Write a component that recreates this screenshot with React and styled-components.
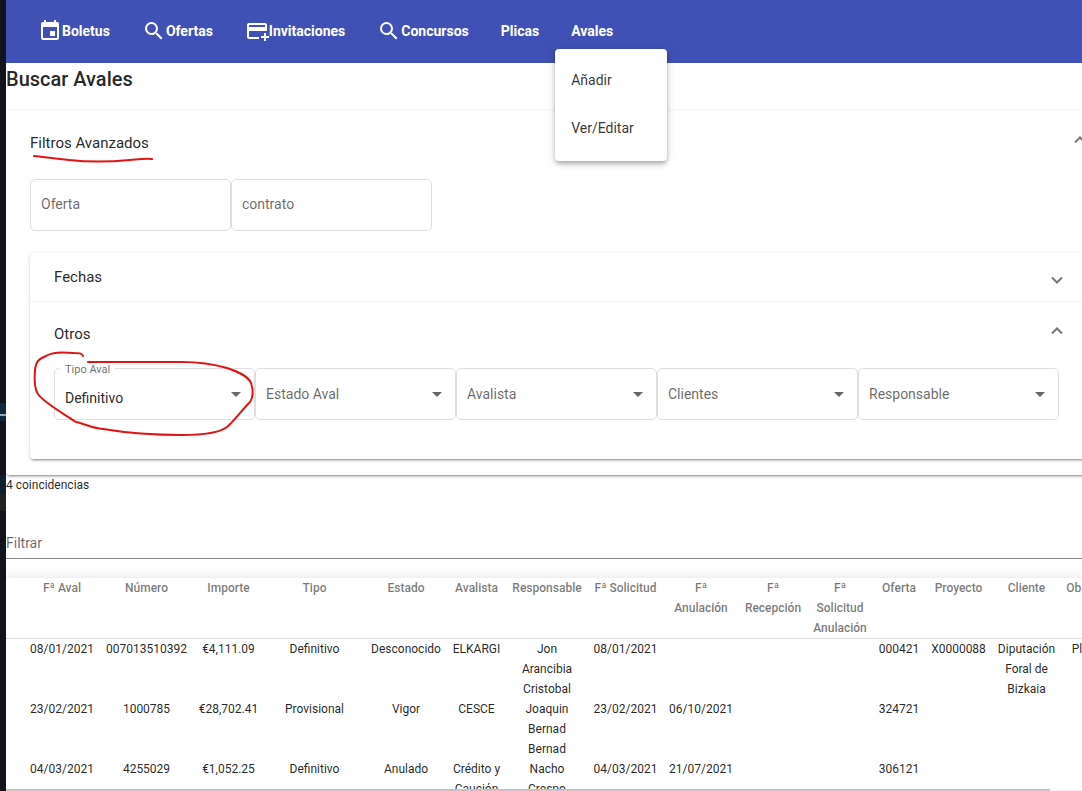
import React from "react";
import styled, { createGlobalStyle } from "styled-components";
import { MdAddCard, MdArrowDropDown, MdEvent, MdSearch } from "react-icons/md";

const GlobalStyle = createGlobalStyle`
  * { box-sizing: border-box; }
  body {
    margin: 0;
    overflow: hidden;
    background: #fff;
    color: rgba(0, 0, 0, 0.87);
    font: 400 14px/20px Roboto, "Liberation Sans", sans-serif;
  }
`;

const Page = styled.div`
  position: relative;
  display: flex;
  height: 100vh;
  overflow: hidden;
`;

const Gutter = styled.div`
  flex: 0 0 6px;
  background: linear-gradient(
    #12141d 0 403px,
    #10283c 403px 414px,
    #9aa4ac 414px 416px,
    #10283c 416px 421px,
    #12141d 421px 475px,
    #10202f 475px 494px,
    #222327 494px 511px,
    #12141d 511px
  );
`;

const Main = styled.main`
  flex: 1;
  min-width: 0;
  display: flex;
  flex-direction: column;
  overflow: hidden;
`;

const Toolbar = styled.nav`
  flex: none;
  display: flex;
  align-items: center;
  height: 63px;
  padding: 0 16px 2px;
  background: #3f51b5;
`;

const NavItem = styled.div`
  position: relative;
`;

const NavButton = styled.button`
  display: flex;
  align-items: center;
  height: 36px;
  padding: 0 16px;
  border: 0;
  background: none;
  color: #fff;
  font: 700 14px/20px Roboto, sans-serif;
  cursor: pointer;
  svg { width: 24px; height: 24px; }
`;

const Menu = styled.div`
  position: absolute;
  z-index: 2;
  top: 100%;
  left: 0;
  width: 112px;
  padding: 8px 0;
  border-radius: 4px;
  background: #fff;
  box-shadow: 0 2px 4px -1px rgba(0, 0, 0, 0.2), 0 4px 5px rgba(0, 0, 0, 0.14),
    0 1px 10px rgba(0, 0, 0, 0.12);
`;

const MenuItem = styled.button`
  display: block;
  width: 100%;
  height: 48px;
  padding: 0 16px 2px;
  border: 0;
  background: none;
  color: rgba(0, 0, 0, 0.8);
  font: 400 14px/20px Roboto, sans-serif;
  text-align: left;
`;

const Title = styled.h1`
  flex: none;
  height: 48px;
  margin: 0;
  font-size: 20px;
  font-weight: 500;
  line-height: 32px;
`;

const elevation = `
  box-shadow: 0 3px 1px -2px rgba(0, 0, 0, 0.2), 0 2px 2px rgba(0, 0, 0, 0.14),
    0 1px 5px rgba(0, 0, 0, 0.12);
`;

const Panel = styled.section`
  flex: none;
  width: calc(100% + 28px);
  padding: 0 24px 16px;
  border-radius: 4px;
  ${elevation}
`;

const PanelHeader = styled.button`
  display: flex;
  align-items: center;
  justify-content: space-between;
  width: 100%;
  height: ${(p) => (p.$open ? 64 : 48)}px;
  padding: ${(p) => (p.$inner ? "0 23px 0 24px" : 0)};
  border: 0;
  background: none;
  color: inherit;
  font: 400 15px/24px Roboto, sans-serif;
  text-align: left;
`;

const ChevronIcon = styled.svg`
  width: 12px;
  height: 8px;
  margin: ${(p) => (p.$open ? "0 0 6px" : "6px 0 0")};
  fill: none;
  stroke: #757575;
  stroke-width: 2;
  transform: ${(p) => (p.$open ? "none" : "rotate(180deg)")};
`;

const Accordion = styled.div`
  margin-top: 22px;
  border-radius: 4px;
  ${elevation}
`;

const Section = styled.div`
  & + & { border-top: 1px solid #f0f0f0; }
`;

const Fields = styled.div`
  display: flex;
  padding: ${(p) => (p.$inner ? "2px 24px 39px" : "4px 0 0")};
`;

const Field = styled.div`
  position: relative;
  flex: 0 0 201px;
  color: rgba(0, 0, 0, 0.6);
  > svg {
    position: absolute;
    top: 14px;
    right: 7px;
    width: 24px;
    height: 24px;
    pointer-events: none;
  }
`;

const FloatingLabel = styled.label`
  position: absolute;
  top: -6px;
  left: 6px;
  padding: 0 5px;
  background: #fff;
  font-size: 11px;
  line-height: 16px;
`;

const control = `
  display: block;
  width: 100%;
  height: 52px;
  margin: 0;
  border: 1px solid #dedede;
  border-radius: 5px;
  background: #fff;
  font: 400 14px/20px Roboto, sans-serif;
  outline: 0;
`;

const TextInput = styled.input`
  ${control}
  padding: 0 10px 2px;
  &::placeholder { color: rgba(0, 0, 0, 0.6); opacity: 1; }
`;

const Select = styled.select`
  ${control}
  appearance: none;
  padding: ${(p) => (p.$filled ? "8px 32px 0 10px" : "0 32px 0 10px")};
  color: ${(p) => (p.$filled ? "rgba(0, 0, 0, 0.87)" : "rgba(0, 0, 0, 0.6)")};
`;

const Count = styled.p`
  flex: none;
  margin: 0;
  font-size: 12px;
`;

const FilterInput = styled.input`
  flex: none;
  height: 32px;
  margin: 32px 0 19px;
  padding: 0;
  border: 0;
  border-bottom: 1px solid #8c8c8c;
  font: 400 14px/20px Roboto, sans-serif;
  outline: 0;
  &::placeholder { color: rgba(0, 0, 0, 0.6); opacity: 1; }
`;

const TableArea = styled.div`
  flex: 1;
  min-height: 0;
  overflow: hidden;
  box-shadow: 0 5px 5px -3px rgba(0, 0, 0, 0.2), 0 8px 10px 1px rgba(0, 0, 0, 0.14),
    0 3px 14px 2px rgba(0, 0, 0, 0.12);
`;

const Table = styled.table`
  table-layout: fixed;
  width: 1145px;
  border-collapse: collapse;
  font-size: 12px;
  text-align: center;
  th, td { padding: 0 5px; vertical-align: top; }
  th {
    border-bottom: 1px solid #dcdcdc;
    color: rgba(0, 0, 0, 0.54);
    font-weight: 500;
  }
  td { height: 60px; }
  th:first-child, td:first-child { padding-left: 23px; }
`;

const ScrollTrack = styled.div`
  flex: none;
  height: 2px;
  background: #f6f6f6;
`;

const ScrollThumb = styled.div`
  width: 97%;
  height: 2px;
  background: #c4c4c4;
`;

const Marks = styled.svg`
  position: absolute;
  z-index: 3;
  top: 0;
  left: 0;
  width: 300px;
  height: 460px;
  fill: none;
  stroke: #e01414;
  stroke-width: 2;
  stroke-linecap: round;
  stroke-linejoin: round;
  pointer-events: none;
`;

const NAV = [
  { label: "Boletus", Icon: MdEvent },
  { label: "Ofertas", Icon: MdSearch },
  { label: "Invitaciones", Icon: MdAddCard },
  { label: "Concursos", Icon: MdSearch },
  { label: "Plicas" },
];

const COLUMNS = [
  ["Fª Aval", 94],
  ["Número", 93],
  ["Importe", 71],
  ["Tipo", 101],
  ["Estado", 82],
  ["Avalista", 59],
  ["Responsable", 82],
  ["Fª Solicitud", 75],
  ["Fª Anulación", 76],
  ["Fª Recepción", 68],
  ["Fª Solicitud Anulación", 66],
  ["Oferta", 52],
  ["Proyecto", 67],
  ["Cliente", 69],
  ["Observaciones", 90],
];

const ROWS = [
  ["08/01/2021", "007013510392", "€4,111.09", "Definitivo", "Desconocido", "ELKARGI", "Jon Arancibia Cristobal", "08/01/2021", "", "", "", "000421", "X0000088", "Diputación Foral de Bizkaia", "Planificación"],
  ["23/02/2021", "1000785", "€28,702.41", "Provisional", "Vigor", "CESCE", "Joaquin Bernad Bernad", "23/02/2021", "06/10/2021", "", "", "324721", "", "", ""],
  ["04/03/2021", "4255029", "€1,052.25", "Definitivo", "Anulado", "Crédito y Caución", "Nacho Crespo", "04/03/2021", "21/07/2021", "", "", "306121", "", "", ""],
];

function Chevron({ open }) {
  return (
    <ChevronIcon $open={open} viewBox="0 0 12 8" aria-hidden="true">
      <path d="M1 6.5 6 1.5l5 5" />
    </ChevronIcon>
  );
}

function SelectField({ label }) {
  return (
    <Field>
      <Select aria-label={label} defaultValue="">
        <option value="">{label}</option>
      </Select>
      <MdArrowDropDown />
    </Field>
  );
}

export default function App() {
  return (
    <Page>
      <GlobalStyle />
      <Gutter />
      <Main>
        <Toolbar>
          {NAV.map(({ label, Icon }) => (
            <NavItem key={label}>
              <NavButton>
                {Icon && <Icon />}
                {label}
              </NavButton>
            </NavItem>
          ))}
          <NavItem>
            <NavButton aria-expanded="true">Avales</NavButton>
            <Menu>
              <MenuItem>Añadir</MenuItem>
              <MenuItem>Ver/Editar</MenuItem>
            </Menu>
          </NavItem>
        </Toolbar>
        <Title>Buscar Avales</Title>
        <Panel>
          <PanelHeader $open aria-expanded="true">
            Filtros Avanzados
            <Chevron open />
          </PanelHeader>
          <Fields>
            <Field>
              <TextInput aria-label="Oferta" placeholder="Oferta" />
            </Field>
            <Field>
              <TextInput aria-label="contrato" placeholder="contrato" />
            </Field>
          </Fields>
          <Accordion>
            <Section>
              <PanelHeader $inner aria-expanded="false">
                Fechas
                <Chevron />
              </PanelHeader>
            </Section>
            <Section>
              <PanelHeader $inner $open aria-expanded="true">
                Otros
                <Chevron open />
              </PanelHeader>
              <Fields $inner>
                <Field>
                  <Select id="tipo-aval" $filled defaultValue="Definitivo">
                    <option>Definitivo</option>
                    <option>Provisional</option>
                  </Select>
                  <FloatingLabel htmlFor="tipo-aval">Tipo Aval</FloatingLabel>
                  <MdArrowDropDown />
                </Field>
                {["Estado Aval", "Avalista", "Clientes", "Responsable"].map((label) => (
                  <SelectField key={label} label={label} />
                ))}
              </Fields>
            </Section>
          </Accordion>
        </Panel>
        <Count>4 coincidencias</Count>
        <FilterInput aria-label="Filtrar" placeholder="Filtrar" />
        <TableArea>
          <Table>
            <colgroup>
              {COLUMNS.map(([name, width]) => (
                <col key={name} width={width} />
              ))}
            </colgroup>
            <thead>
              <tr>
                {COLUMNS.map(([name]) => (
                  <th key={name} scope="col">{name}</th>
                ))}
              </tr>
            </thead>
            <tbody>
              {ROWS.map((row) => (
                <tr key={row[1]}>
                  {row.map((cell, i) => (
                    <td key={COLUMNS[i][0]}>{cell}</td>
                  ))}
                </tr>
              ))}
            </tbody>
          </Table>
        </TableArea>
        <ScrollTrack>
          <ScrollThumb />
        </ScrollTrack>
      </Main>
      <Marks aria-hidden="true">
        <path d="M34 156c13 1 20 3 35 4 18 2 40 2 61 0 10-1 16-2 22-1" />
        <path d="M83 356c-1-3-4-3-9-3-13-1-22-1-28 3-7 3-10 5-11 14-1 12 0 20 3 24 5 8 26 20 38 28 6 1 16 6 27 7 24 4 58 6 79 6 18 0 36-1 45-8 7-6 15-17 23-25 4-6 3-13 1-19-3-7-12-11-24-15-14-4-26-6-45-6H88" />
      </Marks>
    </Page>
  );
}
